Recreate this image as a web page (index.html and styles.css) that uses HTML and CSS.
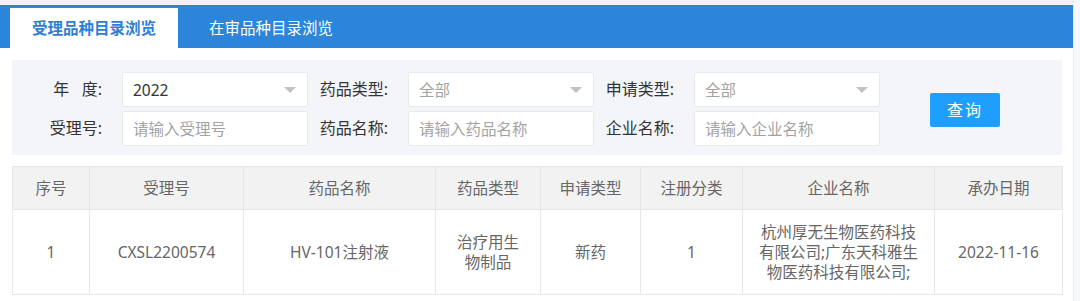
FILE: index.html
```html
<!DOCTYPE html>
<html>
<head>
    <meta charset="utf-8">
    <meta name="viewport" content="width=device-width, initial-scale=1.0">
    <title>受理品种目录浏览</title>
    <link rel="stylesheet" href="styles.css">
</head>
<body>
<div class="page">
    <div class="main">
        <div class="topline"></div>
        <div class="tabs">
            <a class="tab active">受理品种目录浏览</a>
            <a class="tab">在审品种目录浏览</a>
        </div>

        <div class="content">
            <!-- search form -->
            <div class="panel">
                <label class="lbl">年&nbsp;&nbsp;&nbsp;度:</label>
                <div class="sel"><span class="val">2022</span><i class="arrow"></i></div>
                <label class="lbl">药品类型:</label>
                <div class="sel"><span class="val ph">全部</span><i class="arrow"></i></div>
                <label class="lbl">申请类型:</label>
                <div class="sel"><span class="val ph">全部</span><i class="arrow"></i></div>
                <div class="btn-cell"><a class="btn">查询</a></div>

                <label class="lbl">受理号:</label>
                <div class="inp"><span class="ph">请输入受理号</span></div>
                <label class="lbl">药品名称:</label>
                <div class="inp"><span class="ph">请输入药品名称</span></div>
                <label class="lbl">企业名称:</label>
                <div class="inp"><span class="ph">请输入企业名称</span></div>
            </div>

            <!-- result table -->
            <table class="grid">
                <colgroup>
                    <col style="width:77px">
                    <col style="width:154px">
                    <col style="width:192px">
                    <col style="width:105px">
                    <col style="width:100px">
                    <col style="width:102px">
                    <col style="width:192px">
                    <col style="width:128px">
                </colgroup>
                <thead>
                    <tr>
                        <th>序号</th>
                        <th>受理号</th>
                        <th>药品名称</th>
                        <th>药品类型</th>
                        <th>申请类型</th>
                        <th>注册分类</th>
                        <th>企业名称</th>
                        <th>承办日期</th>
                    </tr>
                </thead>
                <tbody>
                    <tr>
                        <td>1</td>
                        <td>CXSL2200574</td>
                        <td>HV-101注射液</td>
                        <td class="wrap">治疗用生物制品</td>
                        <td>新药</td>
                        <td>1</td>
                        <td class="wrap">杭州厚无生物医药科技有限公司;广东天科雅生物医药科技有限公司;</td>
                        <td>2022-11-16</td>
                    </tr>
                </tbody>
            </table>
        </div>
    </div>
    <div class="scrollbar"></div>
</div>
</body>
</html>
```

FILE: styles.css
```css
html, body {
    margin: 0;
    padding: 0;
    background: #ffffff;
}

body {
    font-family: "Noto Sans", "Noto Sans CJK SC", sans-serif;
    font-size: 15px;
    color: #333;
}

.page {
    display: flex;
    height: 301px;
}

.main {
    width: 1073px;
}

.scrollbar {
    flex: 1;
    background: #f6f8fb;
    border-left: 1px solid #e9edf2;
}

.topline {
    height: 5px;
    background: #eef1f5;
}

/* tabs */
.tabs {
    height: 43px;
    background: #2c85d8;
    display: flex;
    align-items: flex-end;
    padding-left: 10px;
}

.tab {
    height: 40px;
    line-height: 40px;
    padding: 0 22px;
    margin-right: 9px;
    font-size: 15.5px;
    color: #ffffff;
    cursor: pointer;
}

.tab.active {
    background: #ffffff;
    color: #2d80d5;
    font-weight: 600;
}

.content {
    padding: 12px 11px 0 12px;
}

/* search panel */
.panel {
    height: 95px;
    box-sizing: border-box;
    background: #f3f5f8;
    padding: 12px 10px 0 10px;
    display: grid;
    grid-template-columns: 100px 186px 100px 186px 100px 186px 1fr;
    grid-template-rows: 35px 35px;
    row-gap: 4px;
}

.lbl {
    text-align: right;
    padding-right: 20px;
    line-height: 35px;
    font-size: 16px;
    color: #333;
}

.sel, .inp {
    background: #ffffff;
    border: 1px solid #e8eaee;
    border-radius: 2px;
    display: flex;
    align-items: center;
    padding: 0 11px 0 10px;
    justify-content: space-between;
    font-size: 15.5px;
}

.val {
    color: #333;
}

.ph {
    color: #a3a3a3;
}

.arrow {
    width: 0;
    height: 0;
    border-top: 6px solid #c2c2c2;
    border-left: 6px solid transparent;
    border-right: 6px solid transparent;
}

.btn-cell {
    grid-row: 1 / 3;
    grid-column: 7;
    display: flex;
    align-items: center;
    padding-left: 50px;
    padding-top: 2px;
}

.btn {
    width: 70px;
    height: 34px;
    line-height: 34px;
    text-align: center;
    background: #1e9fff;
    color: #ffffff;
    border-radius: 2px;
    font-size: 16px;
    letter-spacing: 2px;
    cursor: pointer;
}

/* table */
.grid {
    margin-top: 11px;
    width: 1050px;
    border-collapse: collapse;
    table-layout: fixed;
    color: #666;
    font-size: 15.5px;
}

.grid th, .grid td {
    border: 1px solid #e6e6e6;
    text-align: center;
    line-height: 20px;
    font-weight: normal;
}

.grid th {
    background: #f2f2f2;
    height: 42px;
    padding: 0;
}

.grid td {
    height: 84px;
    padding: 0 15px;
}

.grid td.wrap {
    word-break: break-all;
}
```
